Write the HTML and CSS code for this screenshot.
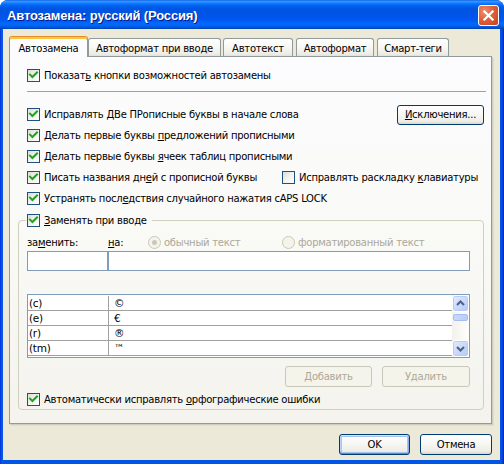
FILE: index.html
```html
<!DOCTYPE html>
<html lang="ru">
<head>
<meta charset="utf-8">
<title>Автозамена</title>
<link rel="stylesheet" href="styles.css">
</head>
<body>
<div class="window">
  <div class="titlebar">
    <span class="title">Автозамена: русский (Россия)</span>
    <span class="close"><svg viewBox="0 0 21 21" width="21" height="21"><path d="M6 6 L15 15 M15 6 L6 15" stroke="#fff" stroke-width="2.4" stroke-linecap="square"/></svg></span>
  </div>
  <div class="client">
    <div class="tabs">
      <div class="tab active t1">Автозамена</div>
      <div class="tab t2">Автоформат при вводе</div>
      <div class="tab t3">Автотекст</div>
      <div class="tab t4">Автоформат</div>
      <div class="tab t5">Смарт-теги</div>
    </div>
    <div class="panel">
      <div class="row r-first">
        <span class="cb"><svg viewBox="0 0 11 11"><path d="M2 4.6 L4.4 7 L9 2.4" class="chk"/></svg></span>
        <span class="lbl">Показат<u>ь</u> кнопки возможностей автозамены</span>
      </div>
      <div class="sep"></div>
      <div class="rows">
        <div class="row r21">
          <span class="cb"><svg viewBox="0 0 11 11"><path d="M2 4.6 L4.4 7 L9 2.4" class="chk"/></svg></span>
          <span class="lbl">Исправлять <u>Д</u>Ве ПРописные буквы в начале слова</span>
          <button class="btn exc"><u>И</u>сключения...</button>
        </div>
        <div class="row r21">
          <span class="cb"><svg viewBox="0 0 11 11"><path d="M2 4.6 L4.4 7 L9 2.4" class="chk"/></svg></span>
          <span class="lbl">Делать первые буквы <u>п</u>редложений прописными</span>
        </div>
        <div class="row r21">
          <span class="cb"><svg viewBox="0 0 11 11"><path d="M2 4.6 L4.4 7 L9 2.4" class="chk"/></svg></span>
          <span class="lbl">Делать первые буквы <u>я</u>чеек таблиц прописными</span>
        </div>
        <div class="row r21">
          <span class="col-a">
            <span class="cb"><svg viewBox="0 0 11 11"><path d="M2 4.6 L4.4 7 L9 2.4" class="chk"/></svg></span>
            <span class="lbl">Писать названия дн<u>е</u>й с прописной буквы</span>
          </span>
          <span class="cb"></span>
          <span class="lbl">Исправлять раскладку <u>к</u>лавиатуры</span>
        </div>
        <div class="row r21">
          <span class="cb"><svg viewBox="0 0 11 11"><path d="M2 4.6 L4.4 7 L9 2.4" class="chk"/></svg></span>
          <span class="lbl">Устранять посл<u>е</u>дствия случайного нажатия cAPS LOCK</span>
        </div>
      </div>
      <fieldset class="group">
        <legend class="legend">
          <span class="cb"><svg viewBox="0 0 11 11"><path d="M2 4.6 L4.4 7 L9 2.4" class="chk"/></svg></span>
          <span class="lbl"><u>З</u>аменять при вводе</span>
        </legend>
        <div class="labels">
          <span>за<u>м</u>енить:</span>
          <span class="labels-right">
            <span class="lbl-on"><u>н</u>а:</span>
            <span class="ropt r1"><span class="radio on"></span><span class="dis">обычный текст</span></span>
            <span class="ropt"><span class="radio"></span><span class="dis">форматированный текст</span></span>
          </span>
        </div>
        <div class="inputs">
          <span class="field"></span>
          <span class="field"></span>
        </div>
        <div class="list">
          <div class="list-body">
            <div class="lrow"><span class="c1">(c)</span><span class="c2">©</span></div>
            <div class="lrow"><span class="c1">(e)</span><span class="c2">€</span></div>
            <div class="lrow"><span class="c1">(r)</span><span class="c2">®</span></div>
            <div class="lrow"><span class="c1">(tm)</span><span class="c2">™</span></div>
          </div>
          <div class="scroll">
            <span class="sbtn"><svg viewBox="0 0 15 15"><path d="M4 9 L7.5 5.5 L11 9" class="arrow"/></svg></span>
            <span class="track"><span class="thumb"></span></span>
            <span class="sbtn"><svg viewBox="0 0 15 15"><path d="M4 6 L7.5 9.5 L11 6" class="arrow"/></svg></span>
          </div>
        </div>
        <div class="list-buttons">
          <button class="btn disabled add">Добавить</button>
          <button class="btn disabled del">Удалить</button>
        </div>
        <div class="row r-last">
          <span class="cb"><svg viewBox="0 0 11 11"><path d="M2 4.6 L4.4 7 L9 2.4" class="chk"/></svg></span>
          <span class="lbl">Автоматически исправлять <u>о</u>рфографические ошибки</span>
        </div>
      </fieldset>
    </div>
    <div class="dlg-buttons">
      <button class="btn default">OK</button>
      <button class="btn cancel">Отмена</button>
    </div>
  </div>
</div>
</body>
</html>
```

FILE: styles.css
```css
* { box-sizing: border-box; }
html, body { margin: 0; padding: 0; }
body {
  width: 504px;
  height: 464px;
  overflow: hidden;
  background: #ffffff;
  font-family: "DejaVu Sans", Tahoma, sans-serif;
  font-size: 10px;
  letter-spacing: -0.25px;
  color: #000;
}
u { text-decoration: underline; text-underline-offset: 1px; }

.window {
  width: 504px;
  height: 464px;
  display: flex;
  flex-direction: column;
  border-radius: 8px 8px 0 0;
  overflow: hidden;
  background: linear-gradient(to right, #0831D9 0, #0A5AEA 2px, #0055E5 3px, #0055E5 calc(100% - 3px), #0A3AD6 calc(100% - 1px), #001EA0 100%);
}

.titlebar {
  height: 29px;
  flex-shrink: 0;
  display: flex;
  align-items: center;
  justify-content: space-between;
  padding: 0 5px 0 7px;
  background: linear-gradient(to bottom, #0A5BE0 0%, #3D95FF 4%, #288EFF 7%, #127DFF 11%, #036FFC 15%, #0262EE 20%, #0057E5 28%, #0054E3 40%, #0055EB 60%, #005BF5 72%, #026AFE 82%, #0062EF 90%, #0052D6 95%, #0040AB 100%);
}
.title {
  font-family: "Liberation Sans", Arial, sans-serif;
  font-weight: bold;
  font-size: 13px;
  color: #fff;
  text-shadow: 1px 1px 0 #0A1883;
  padding-top: 1px;
  letter-spacing: -0.15px;
}
.close {
  width: 21px;
  height: 21px;
  border: 1px solid #fff;
  border-radius: 3px;
  display: flex;
  align-items: center;
  justify-content: center;
  background: radial-gradient(circle at 30% 30%, #F08F6E 0%, #E0603A 45%, #C4421E 100%);
  margin-top: 2px;
}
.close svg { display: block; width: 19px; height: 19px; }

.client {
  flex: 1;
  margin: 0 4px 4px 3px;
  background: #ECE9D8;
  padding: 7px 8px 5px 6px;
  display: flex;
  flex-direction: column;
}

.tabs {
  display: flex;
  align-items: flex-end;
  height: 21px;
  margin-bottom: -1px;
  position: relative;
  z-index: 1;
}
.tab {
  height: 18px;
  margin-bottom: 1px;
  border: 1px solid #919B9C;
  border-bottom: none;
  border-radius: 3px 3px 0 0;
  background: linear-gradient(to bottom, #FFFFFF 0%, #F7F7F3 50%, #EDEBE5 90%, #E3E0D6 100%);
  display: flex;
  align-items: center;
  justify-content: center;
  padding-top: 1px;
  white-space: nowrap;
}
.tab.active {
  height: 21px;
  margin-bottom: 0;
  background: #FCFCFE;
  border-top: 1px solid #E68B2C;
  box-shadow: inset 0 2px 0 #FFC83C;
  padding-top: 2px;
}
.t1 { width: 79px; }
.t2 { width: 133px; }
.t3 { width: 70px; margin-left: 2px; }
.t4 { width: 78px; margin-left: 3px; }
.t5 { width: 72px; margin-left: 3px; }

.panel {
  width: 483px;
  height: 368px;
  border: 1px solid #919B9C;
  background: linear-gradient(to bottom, #FCFCFE 0%, #F9F9F6 50%, #F4F3EE 100%);
  box-shadow: 1px 1px 0 #D0CEBF, 2px 2px 0 #E0DDCD;
  padding: 11px 7px 13px 8px;
  display: flex;
  flex-direction: column;
}

.row {
  display: flex;
  align-items: center;
  margin-left: 9px;
}
.r-first { height: 15px; }
.r21 { height: 21px; }
.lbl { margin-left: 4px; white-space: nowrap; }
.col-a { display: flex; align-items: center; width: 255px; flex-shrink: 0; }

.cb {
  width: 13px;
  height: 13px;
  flex-shrink: 0;
  border: 1px solid #1C5180;
  background: linear-gradient(135deg, #DCDCD7 0%, #F2F2EE 50%, #FFFFFF 100%);
  display: inline-flex;
}
.cb svg { width: 11px; height: 11px; display: block; }
.chk { fill: none; stroke: #21A121; stroke-width: 2; stroke-linecap: square; }

.sep {
  margin: 8px -2px 0 9px;
  height: 1px;
  background: #A0A0A0;
}
.rows { margin-top: 12px; }

.btn {
  font-family: "DejaVu Sans", Tahoma, sans-serif;
  font-size: 10px;
  letter-spacing: -0.25px;
  color: #000;
  border: 1px solid #003C74;
  border-radius: 3px;
  background: linear-gradient(to bottom, #FFFFFF 0%, #F8F8F5 40%, #EEEDE6 85%, #D9D5CA 100%);
  padding: 0;
  display: flex;
  align-items: center;
  justify-content: center;
}
.exc { margin-left: auto; width: 87px; height: 20px; }

.group {
  margin: 4px 0 0 0;
  padding: 0 13px 2px 8px;
  border: 1px solid #D0D0BF;
  border-radius: 4px;
  min-width: 0;
}
.legend {
  display: flex;
  align-items: center;
  height: 15px;
  padding: 0 5px 0 1px;
  margin-left: -1px;
}

.labels {
  display: grid;
  grid-template-columns: 81px 1fr;
  height: 14px;
  margin-top: 7px;
  align-items: center;
}
.labels-right { display: flex; align-items: center; }
.lbl-on { width: 40px; flex-shrink: 0; }
.ropt { display: flex; align-items: center; }
.ropt.r1 { width: 134px; flex-shrink: 0; }
.dis { color: #ACA899; margin-left: 3px; white-space: nowrap; }
.radio {
  width: 13px;
  height: 13px;
  border-radius: 50%;
  border: 1px solid #CAC8BB;
  background: #F5F4EA;
  display: inline-flex;
  align-items: center;
  justify-content: center;
}
.radio.on::after {
  content: "";
  width: 5px;
  height: 5px;
  border-radius: 50%;
  background: #CAC8BB;
}

.inputs {
  display: grid;
  grid-template-columns: 81px 1fr;
  margin-top: 2px;
  height: 20px;
}
.field {
  border: 1px solid #7F9DB9;
  background: #fff;
}

.list {
  margin-top: 23px;
  height: 64px;
  border: 1px solid #7F9DB9;
  background: #fff;
  display: flex;
}
.list-body { flex: 1; padding-top: 1px; }
.lrow {
  display: grid;
  grid-template-columns: 80px 1fr;
  height: 15px;
  border-bottom: 1px solid #A0A0A0;
  font-size: 10.5px;
  line-height: 14px;
}
.c1 { padding-left: 1px; }
.c2 { border-left: 1px solid #A0A0A0; padding-left: 5px; }

.scroll {
  width: 17px;
  display: flex;
  flex-direction: column;
  background: linear-gradient(to right, #F3F1EC, #FEFEFB);
}
.sbtn {
  width: 17px;
  height: 17px;
  border: 1px solid #FFFFFF;
  border-radius: 3px;
  background: linear-gradient(135deg, #E5EDFE 0%, #C8D8FB 55%, #B4C9F5 100%);
  box-shadow: inset 0 0 0 1px #B9CCF6;
  display: flex;
  align-items: center;
  justify-content: center;
  flex-shrink: 0;
}
.sbtn svg { width: 15px; height: 15px; display: block; }
.arrow { fill: none; stroke: #4D6185; stroke-width: 2; }
.track { flex: 1; padding-top: 2px; }
.thumb {
  display: block;
  height: 7px;
  margin: 0 1px;
  border: 1px solid #A5BDF1;
  border-radius: 2px;
  background: linear-gradient(to right, #C9D8FC, #B9CCF8);
}

.list-buttons {
  display: flex;
  justify-content: flex-end;
  gap: 10px;
  margin-top: 8px;
  height: 21px;
}
.btn.disabled {
  border-color: #C9C7BA;
  background: #F5F4EA;
  color: #ACA899;
}
.add { width: 87px; }
.del { width: 88px; }

.r-last { height: 15px; margin-top: 5px; margin-left: 0; }

.dlg-buttons {
  display: flex;
  justify-content: flex-end;
  gap: 10px;
  margin-top: 10px;
  height: 21px;
}
.dlg-buttons .btn { width: 71px; }
.btn.cancel { width: 72px; }
.btn.default {
  box-shadow: inset 0 1px 0 #CEE7FF, inset 0 -1px 0 #6982EE, inset 1px 0 0 #B8D4F8, inset -1px 0 0 #89ADE4, inset 0 0 0 2px #A7C3F0;
}
```
